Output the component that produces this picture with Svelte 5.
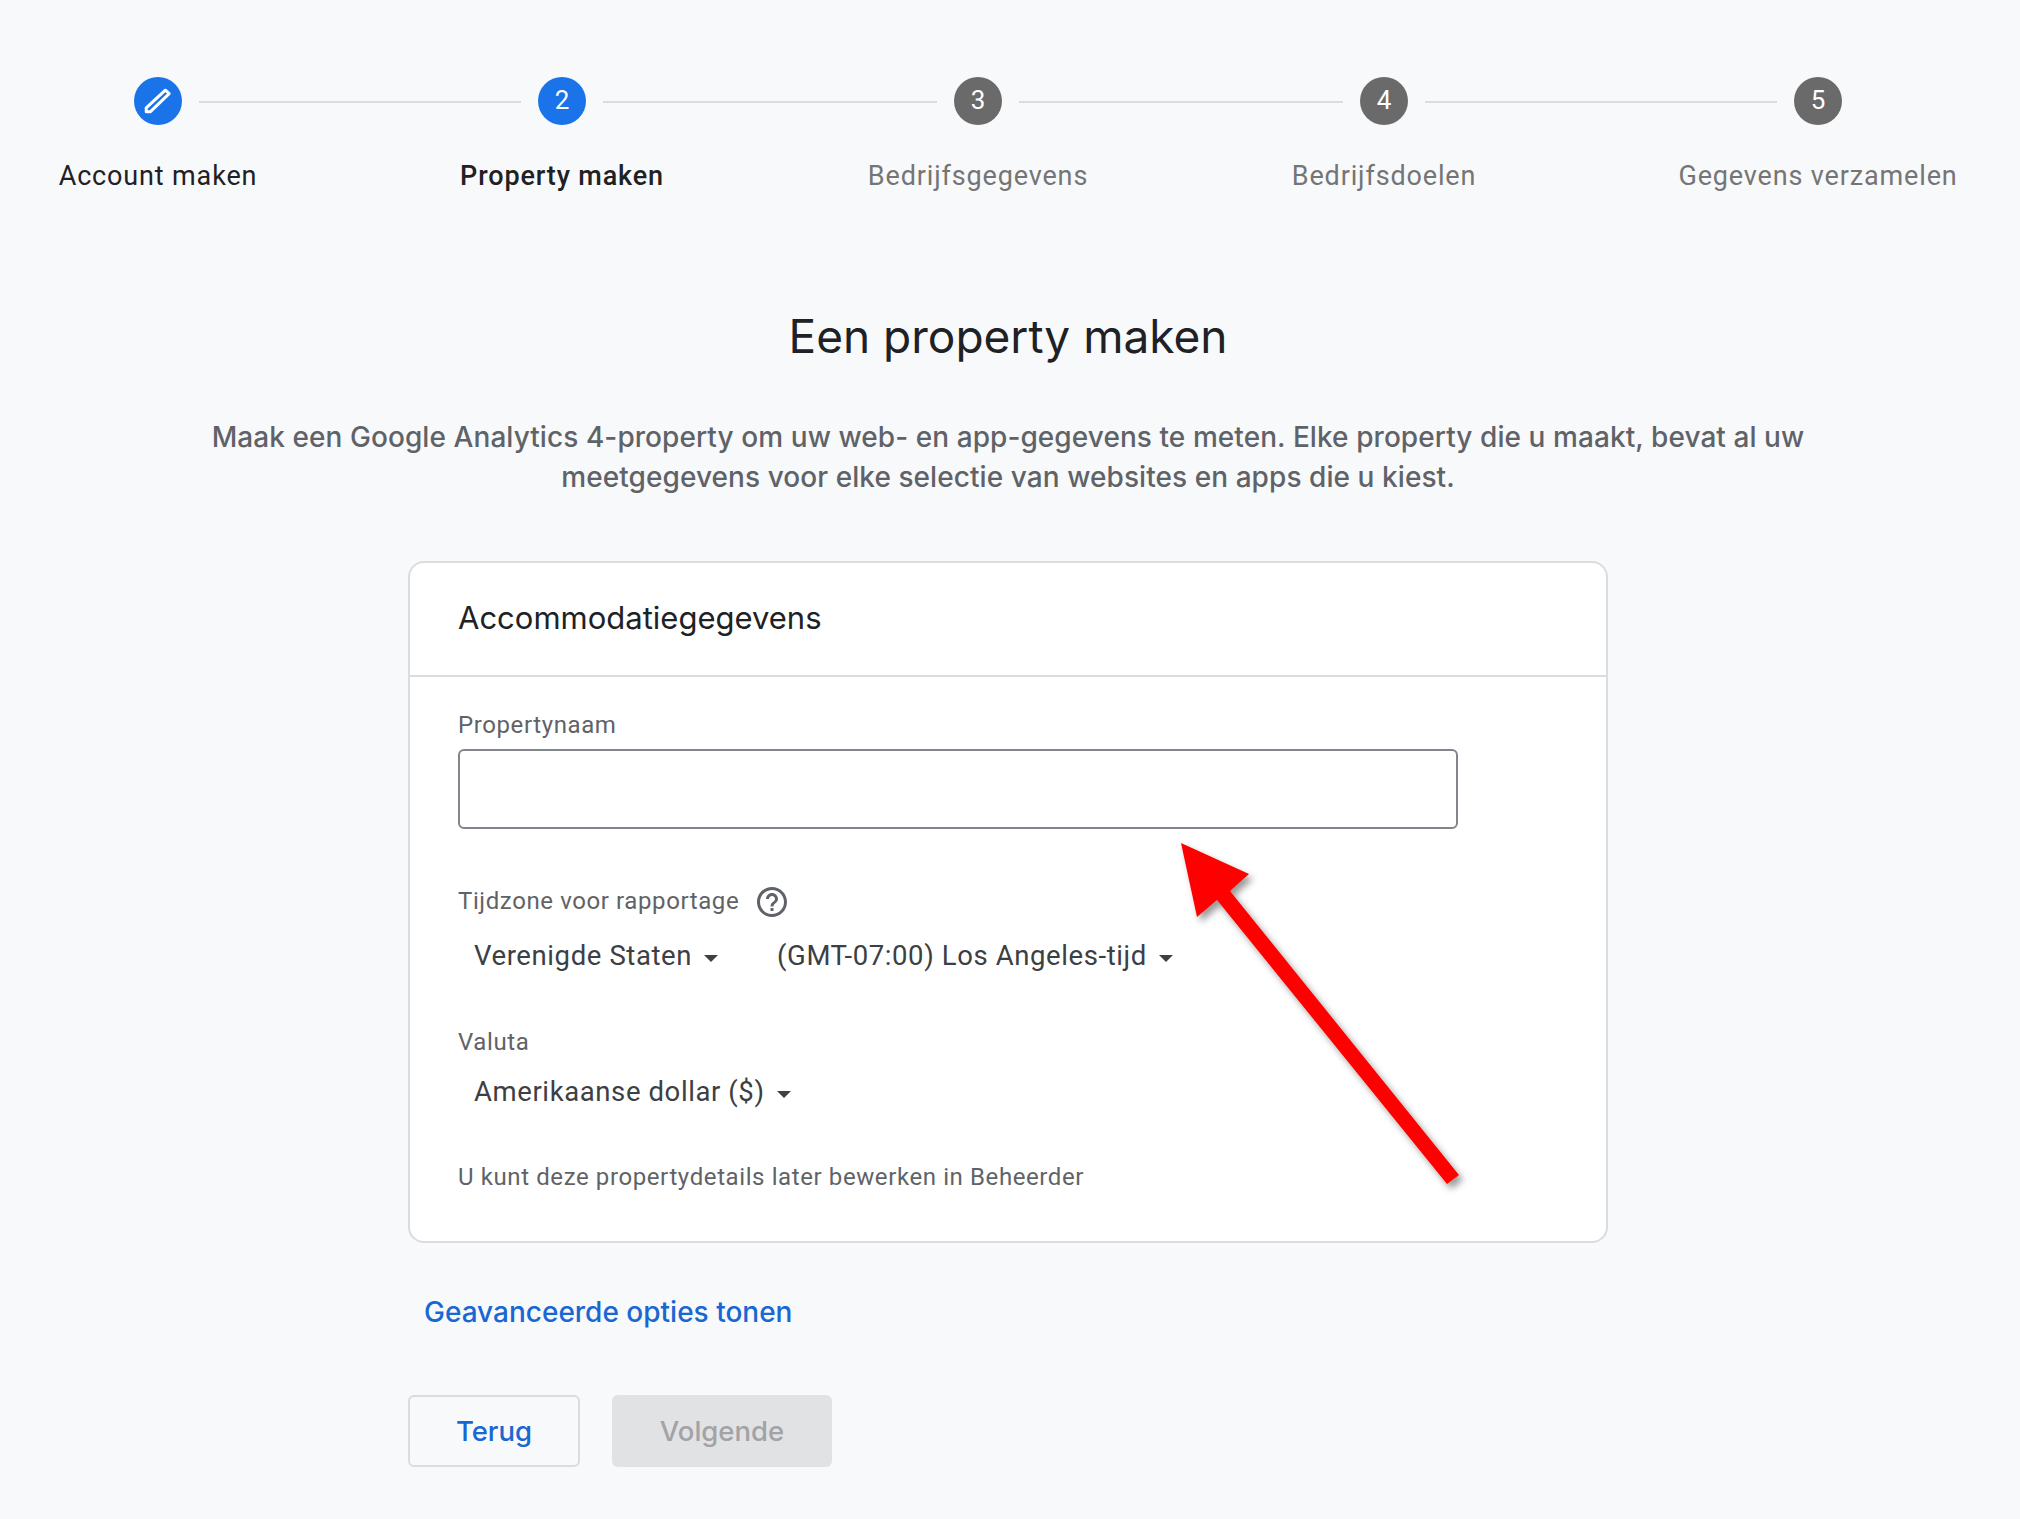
<script lang="ts">
  const steps = [
    { label: "Account maken", state: "done" },
    { label: "Property maken", state: "active", n: 2 },
    { label: "Bedrijfsgegevens", state: "todo", n: 3 },
    { label: "Bedrijfsdoelen", state: "todo", n: 4 },
    { label: "Gegevens verzamelen", state: "todo", n: 5 },
  ];
</script>

<div class="page">
  <div class="stepper">
    {#each steps as step, i}
      <div class="circle {step.state}" style="grid-column: {i * 2 + 1}">
        {#if step.state === "done"}
          <svg viewBox="0 0 24 24" width="48" height="48" aria-hidden="true">
            <path fill="none" stroke="#fff" stroke-width="1.5" stroke-linejoin="round" d="M6.1 17.4v-2L15.7 6.6l1.9 1.7-9.5 9.1z" />
            <path fill="#fff" d="M5.5 18v-2.6l2.6 2.6z" />
          </svg>
        {:else}
          {step.n}
        {/if}
      </div>
      {#if i < steps.length - 1}
        <div class="line" style="grid-column: {i * 2 + 2}"></div>
      {/if}
      <div class="label {step.state}" style="grid-column: {i * 2 + 1}; grid-row: 2">{step.label}</div>
    {/each}
  </div>

  <main class="main">
    <h1>Een property maken</h1>
    <p class="intro">
      Maak een Google Analytics 4-property om uw web- en app-gegevens te meten. Elke property die u maakt, bevat al uw<br />
      meetgegevens voor elke selectie van websites en apps die u kiest.
    </p>

    <section class="card">
      <h2>Accommodatiegegevens</h2>
      <div class="body">
        <label class="field-label" for="propname">Propertynaam</label>
        <input id="propname" class="text-input" type="text" />

        <div class="field-label tz">
          <span>Tijdzone voor rapportage</span>
          <svg viewBox="0 0 24 24" width="36" height="36" aria-hidden="true">
            <path fill="#5f6368" d="M11 18h2v-2h-2v2zm1-16C6.48 2 2 6.48 2 12s4.48 10 10 10 10-4.48 10-10S17.52 2 12 2zm0 18c-4.41 0-8-3.59-8-8s3.59-8 8-8 8 3.59 8 8-3.59 8-8 8zm0-14c-2.21 0-4 1.79-4 4h2c0-1.1.9-2 2-2s2 .9 2 2c0 2-3 1.75-3 5h2c0-2.25 3-2.5 3-5 0-2.21-1.79-4-4-4z" />
          </svg>
        </div>
        <div class="selects">
          <button class="select">Verenigde Staten<i class="caret"></i></button>
          <button class="select">(GMT-07:00) Los Angeles-tijd<i class="caret"></i></button>
        </div>

        <div class="field-label valuta">Valuta</div>
        <div class="selects">
          <button class="select">Amerikaanse dollar ($)<i class="caret"></i></button>
        </div>

        <div class="hint">U kunt deze propertydetails later bewerken in Beheerder</div>
      </div>
    </section>

    <div class="below">
      <a class="advanced" href="#advanced">Geavanceerde opties tonen</a>
      <div class="actions">
        <button class="btn back">Terug</button>
        <button class="btn next" disabled>Volgende</button>
      </div>
    </div>
  </main>

  <!-- red annotation drawn over the screenshot -->
  <svg class="arrow" width="2020" height="1519" viewBox="0 0 2020 1519" aria-hidden="true">
    <defs>
      <filter id="arrow-shadow" x="-10%" y="-10%" width="130%" height="130%">
        <feDropShadow dx="4" dy="5" stdDeviation="3.5" flood-color="#000" flood-opacity="0.4" />
      </filter>
    </defs>
    <polygon
      fill="#ff0000"
      filter="url(#arrow-shadow)"
      points="1181,843 1249,874 1230,891 1459,1175 1447,1184 1217,900 1197,917"
    />
  </svg>
</div>

<style>
  :global(body) {
    margin: 0;
    background: #f8f9fb;
  }

  .page {
    position: relative;
    height: 1519px;
    overflow: hidden;
    font-family: Roboto, sans-serif;
    color: #202124;
  }

  .stepper {
    display: grid;
    grid-template-columns: 48px 356px 48px 368px 48px 358px 48px 386px 48px;
    grid-template-rows: 48px auto;
    row-gap: 35px;
    padding: 77px 0 0 134px;
  }

  .circle {
    grid-row: 1;
    width: 48px;
    height: 48px;
    box-sizing: border-box;
    padding-bottom: 3px;
    border-radius: 50%;
    display: flex;
    align-items: center;
    justify-content: center;
    font-size: 26px;
    color: #fff;
    background: #6a6a6a;
  }

  .circle.done,
  .circle.active {
    background: #1a73e8;
  }

  .circle.done {
    padding-bottom: 0;
  }

  .line {
    grid-row: 1;
    height: 2px;
    margin: 24px 17px 0;
    background: #dadce0;
  }

  .label {
    justify-self: center;
    white-space: nowrap;
    font-size: 27px;
    line-height: 32px;
    letter-spacing: 0.85px;
    color: #757575;
  }

  .label.done {
    color: #202124;
  }

  .label.active {
    color: #202124;
    font-weight: 500;
  }

  .main {
    width: 2016px;
    display: flex;
    flex-direction: column;
    align-items: center;
  }

  h1 {
    margin: 114px 0 0;
    font-family: Inter, sans-serif;
    font-weight: 400;
    font-size: 46px;
    line-height: 60px;
    color: #202124;
  }

  .intro {
    margin: 51px 0 0;
    font-family: Inter, sans-serif;
    font-size: 28px;
    line-height: 40px;
    font-weight: 500;
    letter-spacing: 0.07px;
    text-align: center;
    white-space: nowrap;
    color: #5f6368;
  }

  .card {
    box-sizing: border-box;
    width: 1200px;
    height: 682px;
    margin-top: 64px;
    background: #fff;
    border: 2px solid #dadce0;
    border-radius: 16px;
  }

  h2 {
    box-sizing: border-box;
    height: 114px;
    margin: 0;
    padding: 33px 48px 0;
    border-bottom: 2px solid #dadce0;
    font-family: Inter, sans-serif;
    font-weight: 400;
    font-size: 31px;
    line-height: 44px;
    color: #202124;
  }

  .body {
    display: flex;
    flex-direction: column;
    align-items: flex-start;
    padding: 32px 48px 0;
  }

  .field-label {
    font-size: 24px;
    line-height: 32px;
    letter-spacing: 0.6px;
    color: #5f6368;
  }

  .text-input {
    box-sizing: border-box;
    width: 1000px;
    height: 80px;
    margin-top: 8px;
    padding: 0 20px;
    background: #fff;
    border: 2px solid #80868b;
    border-radius: 6px;
    outline: none;
  }

  .tz {
    display: flex;
    align-items: center;
    gap: 15px;
    margin-top: 53px;
    margin-bottom: 3px;
  }

  .tz svg {
    margin-top: 2px;
  }

  .selects {
    display: flex;
    gap: 59px;
    margin-top: 13px;
    padding-left: 16px;
  }

  .select {
    display: flex;
    align-items: center;
    gap: 12px;
    padding: 0;
    border: 0;
    background: none;
    font-family: Roboto, sans-serif;
    font-size: 27.5px;
    line-height: 40px;
    letter-spacing: 0.6px;
    color: #3c4043;
  }

  .caret {
    width: 0;
    height: 0;
    margin-top: 4px;
    border-left: 7px solid transparent;
    border-right: 7px solid transparent;
    border-top: 7px solid #3c4043;
  }

  .valuta {
    margin-top: 50px;
    margin-bottom: 1px;
  }

  .hint {
    margin-top: 49px;
    font-size: 24px;
    line-height: 32px;
    letter-spacing: 0.6px;
    color: #5f6368;
  }

  .below {
    width: 1200px;
  }

  .advanced {
    display: block;
    margin: 49px 0 0 16px;
    font-family: Inter, sans-serif;
    font-size: 28px;
    line-height: 40px;
    font-weight: 500;
    color: #1967d2;
    text-decoration: none;
  }

  .actions {
    display: flex;
    gap: 32px;
    margin-top: 63px;
  }

  .btn {
    box-sizing: border-box;
    height: 72px;
    border-radius: 6px;
    font-family: Inter, sans-serif;
    font-size: 27.5px;
    font-weight: 500;
  }

  .back {
    width: 172px;
    background: transparent;
    border: 2px solid #dadce0;
    color: #1967d2;
  }

  .next {
    width: 220px;
    background: #e0e2e4;
    border: 0;
    color: #a3a3a6;
  }

  .arrow {
    position: absolute;
    left: 0;
    top: 0;
    pointer-events: none;
  }
</style>
